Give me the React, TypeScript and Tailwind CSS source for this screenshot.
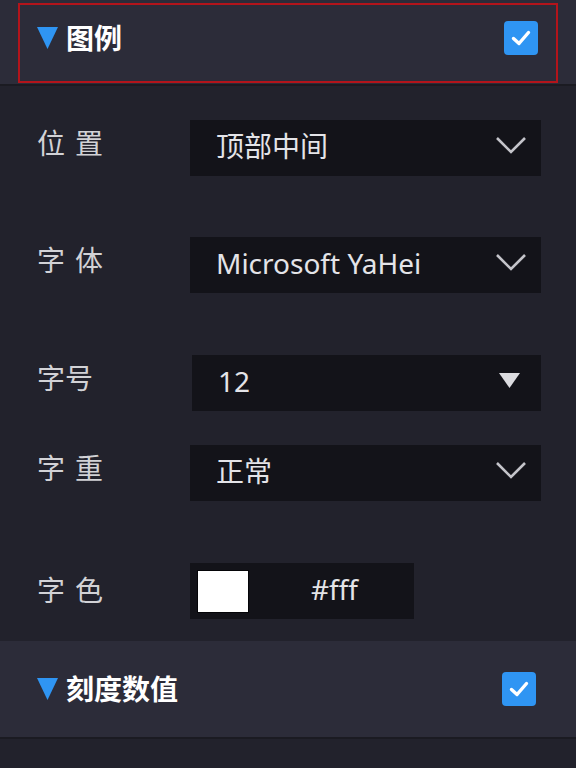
const font = { fontFamily: '"Noto Sans", "Noto Sans CJK SC", sans-serif' };

const Check = () => (
  <div className="flex h-[34px] w-[34px] items-center justify-center rounded-[4px] bg-[#2f95f3]">
    <svg width="24" height="24" viewBox="0 0 24 24">
      <polyline points="4.5,12.5 10,17.5 19.5,6.5" fill="none" stroke="#fff" strokeWidth="3.4" strokeLinecap="round" strokeLinejoin="round" />
    </svg>
  </div>
);

const Triangle = () => (
  <svg width="21" height="22" viewBox="0 0 21 22" className="shrink-0">
    <polygon points="0,0 21,0 10.5,22" fill="#2f95f3" />
  </svg>
);

const Chevron = () => (
  <svg width="32" height="20" viewBox="0 0 32 20" className="-translate-y-[3px]">
    <polyline points="2,3 16,17 30,3" fill="none" stroke="#c4c4ca" strokeWidth="2.6" />
  </svg>
);

const Caret = () => (
  <svg width="21" height="16" viewBox="0 0 21 16" className="-translate-y-[2px]">
    <polygon points="0,0 21,0 10.5,15" fill="#dcdce0" />
  </svg>
);

function Title({ text }: { text: string }) {
  return (
    <div className="flex items-center gap-[8px]">
      <Triangle />
      <span className="text-[28px] leading-none font-bold text-white">{text}</span>
    </div>
  );
}

function Row({
  label,
  value,
  icon,
  className,
  tracking,
  boxClass,
}: {
  label: string;
  value: string;
  icon: "chevron" | "caret";
  className: string;
  tracking: string;
  boxClass: string;
}) {
  return (
    <div className={"flex items-center " + className}>
      <div className={"w-[190px] shrink-0 -translate-y-[5px] pl-[37px] text-[28px] leading-none text-[#d2d2d6] " + tracking}>{label}</div>
      <div className={"flex h-[56px] items-center justify-between bg-[#131319] pl-[26px] " + boxClass}>
        <span className="-translate-y-[2px] text-[28px] leading-none text-[#e4e4e8]">{value}</span>
        {icon === "chevron" ? <Chevron /> : <Caret />}
      </div>
    </div>
  );
}

export default function App() {
  return (
    <div className="h-[768px] w-[576px] overflow-hidden bg-[#22222c]" style={font}>
      <div className="border-b-2 border-[#1b1b22] bg-[#2c2c39] px-[18px] pt-[3px] pb-[1px]">
        <div className="flex h-[80px] items-center justify-between border-2 border-[#b3141b] pb-[10px] pl-[17px] pr-[18px]">
          <Title text="图例" />
          <Check />
        </div>
      </div>

      <div className="flex flex-col pb-[22px] pt-[34px]">
        <Row label="位置" value="顶部中间" icon="chevron" className="" tracking="tracking-[10px]" boxClass="w-[351px] pr-[14px]" />
        <Row label="字体" value="Microsoft YaHei" icon="chevron" className="mt-[61px]" tracking="tracking-[10px]" boxClass="w-[351px] pr-[14px]" />
        <Row label="字号" value="12" icon="caret" className="mt-[62px]" tracking="tracking-[0px]" boxClass="ml-[2px] w-[349px] pr-[21px]" />
        <Row label="字重" value="正常" icon="chevron" className="mt-[34px]" tracking="tracking-[10px]" boxClass="w-[351px] pr-[14px]" />
        <div className="mt-[62px] flex items-center">
          <div className="w-[190px] shrink-0 -translate-y-[1px] pl-[37px] text-[28px] leading-none tracking-[10px] text-[#d2d2d6]">字色</div>
          <div className="flex h-[56px] w-[224px] items-center bg-[#131319] pl-[7px]">
            <div className="h-[43px] w-[52px] border border-[#050508] bg-white" />
            <span className="flex-1 -translate-y-[2px] pl-[6px] text-center text-[28px] leading-none text-[#e4e4e8]">#fff</span>
          </div>
        </div>
      </div>

      <div className="border-b-2 border-[#1b1b22] bg-[#2c2c39] px-[20px]">
        <div className="flex h-[96px] items-center justify-between pl-[17px] pr-[20px]">
          <Title text="刻度数值" />
          <Check />
        </div>
      </div>
    </div>
  );
}
